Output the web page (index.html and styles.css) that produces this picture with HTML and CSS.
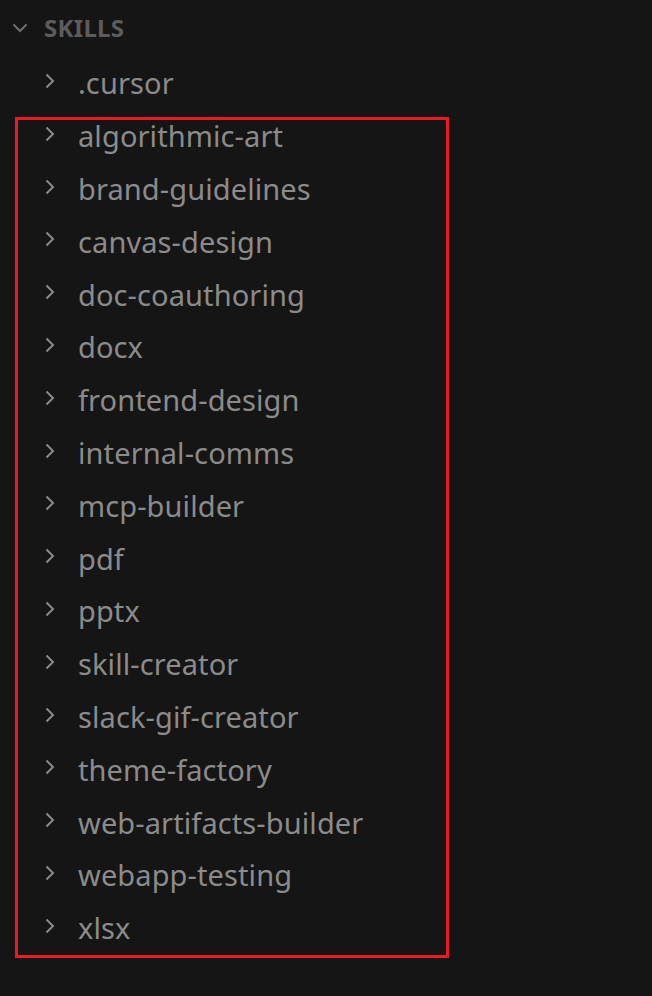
FILE: index.html
```html
<!DOCTYPE html>
<html>
<head>
<meta charset="utf-8">
<link rel="stylesheet" href="styles.css">
</head>
<body>
<div class="explorer">
  <div class="header">
    <svg class="chev-down" width="16" height="10" viewBox="0 0 16 10"><path d="M1.5 1.5 L8 8 L14.5 1.5" fill="none" stroke="#6f6f6f" stroke-width="2"/></svg>
    <span class="title">SKILLS</span>
  </div>
  <div class="row"><svg class="chev" width="10" height="16" viewBox="0 0 10 16"><path d="M1.5 1.5 L8 8 L1.5 14.5" fill="none" stroke="#8a8a8a" stroke-width="2"/></svg><span class="name">.cursor</span></div>
  <div class="group">
    <div class="row"><svg class="chev" width="10" height="16" viewBox="0 0 10 16"><path d="M1.5 1.5 L8 8 L1.5 14.5" fill="none" stroke="#8a8a8a" stroke-width="2"/></svg><span class="name">algorithmic-art</span></div>
    <div class="row"><svg class="chev" width="10" height="16" viewBox="0 0 10 16"><path d="M1.5 1.5 L8 8 L1.5 14.5" fill="none" stroke="#8a8a8a" stroke-width="2"/></svg><span class="name">brand-guidelines</span></div>
    <div class="row"><svg class="chev" width="10" height="16" viewBox="0 0 10 16"><path d="M1.5 1.5 L8 8 L1.5 14.5" fill="none" stroke="#8a8a8a" stroke-width="2"/></svg><span class="name">canvas-design</span></div>
    <div class="row"><svg class="chev" width="10" height="16" viewBox="0 0 10 16"><path d="M1.5 1.5 L8 8 L1.5 14.5" fill="none" stroke="#8a8a8a" stroke-width="2"/></svg><span class="name">doc-coauthoring</span></div>
    <div class="row"><svg class="chev" width="10" height="16" viewBox="0 0 10 16"><path d="M1.5 1.5 L8 8 L1.5 14.5" fill="none" stroke="#8a8a8a" stroke-width="2"/></svg><span class="name">docx</span></div>
    <div class="row"><svg class="chev" width="10" height="16" viewBox="0 0 10 16"><path d="M1.5 1.5 L8 8 L1.5 14.5" fill="none" stroke="#8a8a8a" stroke-width="2"/></svg><span class="name">frontend-design</span></div>
    <div class="row"><svg class="chev" width="10" height="16" viewBox="0 0 10 16"><path d="M1.5 1.5 L8 8 L1.5 14.5" fill="none" stroke="#8a8a8a" stroke-width="2"/></svg><span class="name">internal-comms</span></div>
    <div class="row"><svg class="chev" width="10" height="16" viewBox="0 0 10 16"><path d="M1.5 1.5 L8 8 L1.5 14.5" fill="none" stroke="#8a8a8a" stroke-width="2"/></svg><span class="name">mcp-builder</span></div>
    <div class="row"><svg class="chev" width="10" height="16" viewBox="0 0 10 16"><path d="M1.5 1.5 L8 8 L1.5 14.5" fill="none" stroke="#8a8a8a" stroke-width="2"/></svg><span class="name">pdf</span></div>
    <div class="row"><svg class="chev" width="10" height="16" viewBox="0 0 10 16"><path d="M1.5 1.5 L8 8 L1.5 14.5" fill="none" stroke="#8a8a8a" stroke-width="2"/></svg><span class="name">pptx</span></div>
    <div class="row"><svg class="chev" width="10" height="16" viewBox="0 0 10 16"><path d="M1.5 1.5 L8 8 L1.5 14.5" fill="none" stroke="#8a8a8a" stroke-width="2"/></svg><span class="name">skill-creator</span></div>
    <div class="row"><svg class="chev" width="10" height="16" viewBox="0 0 10 16"><path d="M1.5 1.5 L8 8 L1.5 14.5" fill="none" stroke="#8a8a8a" stroke-width="2"/></svg><span class="name">slack-gif-creator</span></div>
    <div class="row"><svg class="chev" width="10" height="16" viewBox="0 0 10 16"><path d="M1.5 1.5 L8 8 L1.5 14.5" fill="none" stroke="#8a8a8a" stroke-width="2"/></svg><span class="name">theme-factory</span></div>
    <div class="row"><svg class="chev" width="10" height="16" viewBox="0 0 10 16"><path d="M1.5 1.5 L8 8 L1.5 14.5" fill="none" stroke="#8a8a8a" stroke-width="2"/></svg><span class="name">web-artifacts-builder</span></div>
    <div class="row"><svg class="chev" width="10" height="16" viewBox="0 0 10 16"><path d="M1.5 1.5 L8 8 L1.5 14.5" fill="none" stroke="#8a8a8a" stroke-width="2"/></svg><span class="name">webapp-testing</span></div>
    <div class="row"><svg class="chev" width="10" height="16" viewBox="0 0 10 16"><path d="M1.5 1.5 L8 8 L1.5 14.5" fill="none" stroke="#8a8a8a" stroke-width="2"/></svg><span class="name">xlsx</span></div>
  </div>
</div>
</body>
</html>
```
FILE: styles.css
```css
html, body {
  margin: 0;
  padding: 0;
  background: #151515;
  height: 100%;
}
.explorer {
  font-family: "Noto Sans", "Open Sans", sans-serif;
  color: #8b8b8b;
  width: 652px;
  height: 996px;
  background: #151515;
}
.header {
  display: flex;
  align-items: center;
  height: 56.6px;
  padding-left: 12px;
}
.chev-down {
  margin-right: 16px;
  margin-top: -1px;
}
.title {
  font-size: 24px;
  font-weight: 700;
  color: #5c5c5c;
  letter-spacing: 0.3px;
  margin-top: -1px;
  line-height: 1;
}
.row {
  display: flex;
  align-items: center;
  height: 52.8px;
  padding-left: 45px;
  font-size: 29px;
  line-height: 1;
}
.chev {
  margin-right: 23px;
  margin-top: -4px;
}
.name {
  white-space: nowrap;
  letter-spacing: 0.1px;
}
.group {
  position: relative;
}
.group::after {
  content: "";
  position: absolute;
  left: 15px;
  top: 7.4px;
  width: 428px;
  bottom: -3.6px;
  border: 3px solid #e81c24;
  pointer-events: none;
}
```
